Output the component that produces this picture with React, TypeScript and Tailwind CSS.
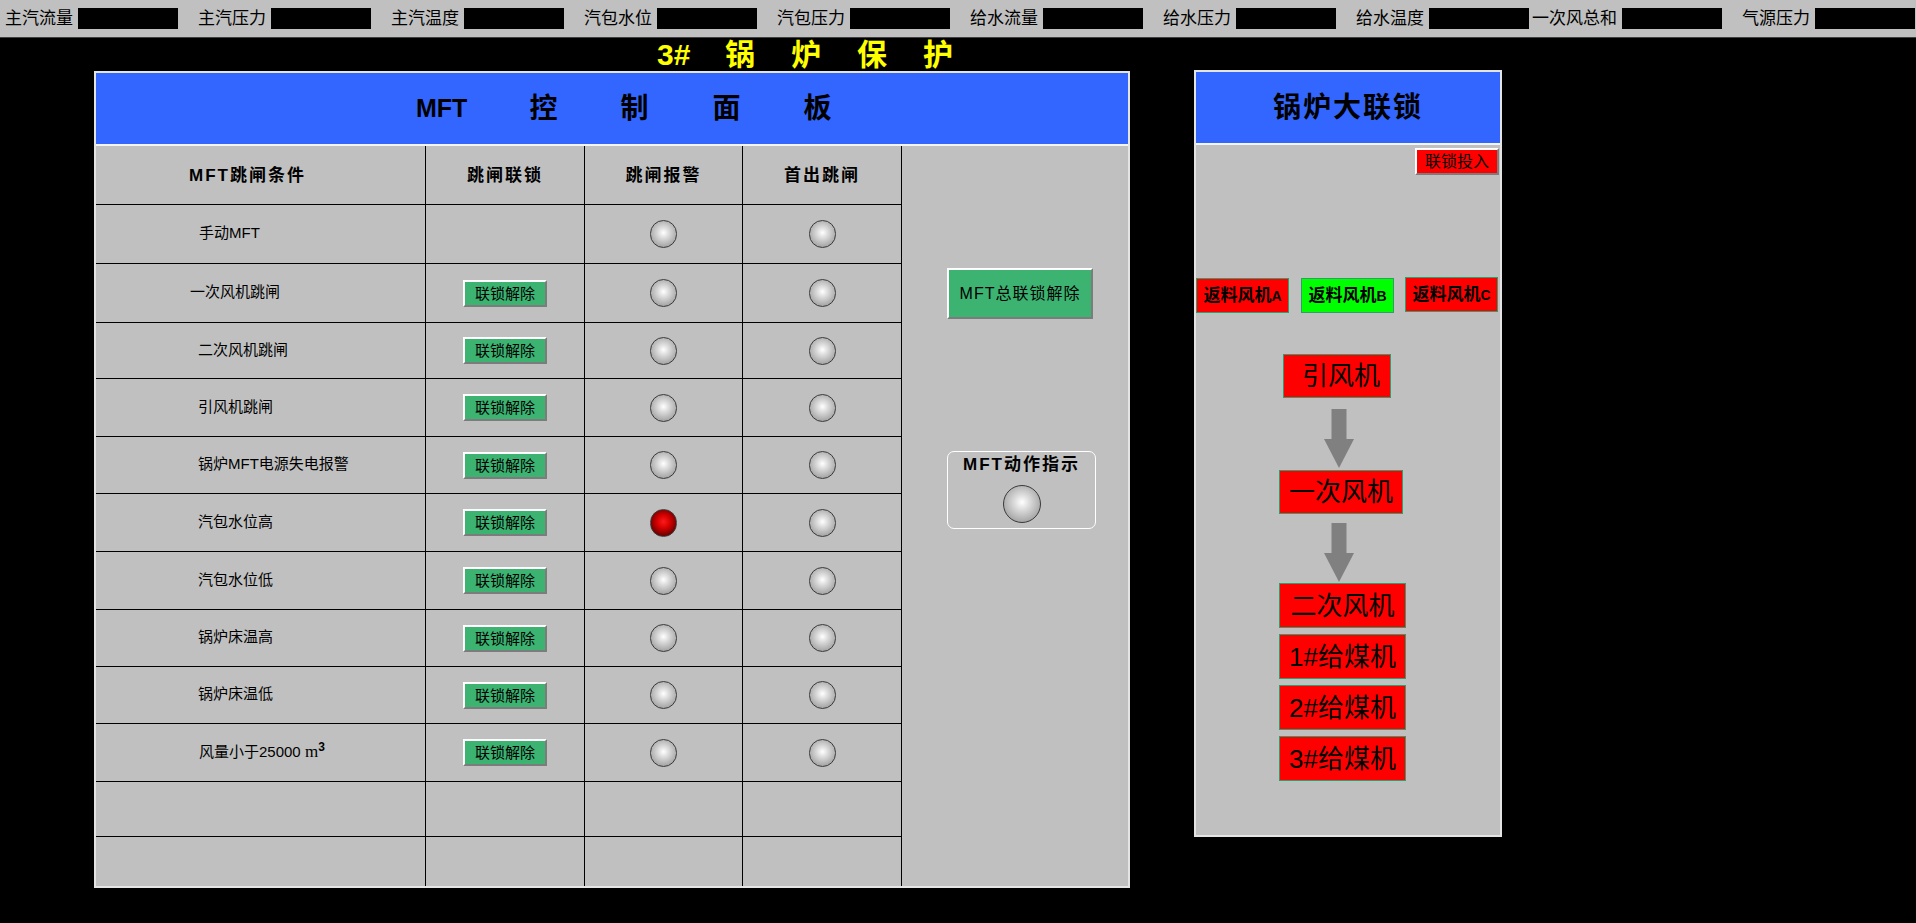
import React from 'react';

const topItems = ['主汽流量', '主汽压力', '主汽温度', '汽包水位', '汽包压力', '给水流量', '给水压力', '给水温度', '一次风总和', '气源压力'];

function Led({ red = false, big = false }: { red?: boolean; big?: boolean }) {
  const size = big ? 'w-[38px] h-[38px]' : 'w-[27px] h-[28px]';
  const fill = red
    ? 'bg-[radial-gradient(circle_at_50%_45%,#ff1a1a_0%,#d40000_35%,#600000_78%,#200000_100%)]'
    : 'bg-[radial-gradient(circle_at_50%_45%,#ffffff_0%,#dcdcdc_28%,#a8a8a8_72%,#7c7c7c_100%)]';
  return <div className={`${size} ${fill} rounded-full border border-[#3a3a3a]`} />;
}

function LockBtn() {
  return (
    <div className="w-[84px] h-[27px] bg-[#3cb371] border-t-2 border-l-2 border-b-2 border-r-2 border-t-white border-l-white border-b-[#7c7c7c] border-r-[#7c7c7c] flex items-center justify-center text-[15px] leading-none text-black">
      联锁解除
    </div>
  );
}

type Row = { label: React.ReactNode; btn: boolean; red?: boolean; pl: string; h: string; empty?: boolean };

const rows: Row[] = [
  { label: '手动MFT', btn: false, pl: 'pl-[103px]', h: 'h-[59px]' },
  { label: '一次风机跳闸', btn: true, pl: 'pl-[94px]', h: 'h-[59px]' },
  { label: '二次风机跳闸', btn: true, pl: 'pl-[102px]', h: 'h-[56px]' },
  { label: '引风机跳闸', btn: true, pl: 'pl-[102px]', h: 'h-[58px]' },
  { label: '锅炉MFT电源失电报警', btn: true, pl: 'pl-[102px]', h: 'h-[57px]' },
  { label: '汽包水位高', btn: true, red: true, pl: 'pl-[102px]', h: 'h-[58px]' },
  { label: '汽包水位低', btn: true, pl: 'pl-[102px]', h: 'h-[58px]' },
  { label: '锅炉床温高', btn: true, pl: 'pl-[102px]', h: 'h-[57px]' },
  { label: '锅炉床温低', btn: true, pl: 'pl-[102px]', h: 'h-[57px]' },
  {
    label: (
      <span>
        风量小于25000{' '}
        <span className="font-['Liberation_Serif',serif] text-[17px]">m</span>
        <sup className="font-bold text-[12px]">3</sup>
      </span>
    ),
    btn: true,
    pl: 'pl-[103px]',
    h: 'h-[58px]',
  },
  { label: '', btn: false, pl: '', h: 'h-[55px]', empty: true },
];

function RedBox({ children, w, h, extra = '' }: { children: React.ReactNode; w: string; h: string; extra?: string }) {
  return (
    <div className={`${w} ${h} ${extra} bg-[#ff0000] border border-[#2f9e6a] flex items-center text-[26px] leading-none text-black`}>
      {children}
    </div>
  );
}

function Arrow() {
  return (
    <svg width="30" height="59" viewBox="0 0 30 59" className="block">
      <rect x="7.5" y="0" width="15" height="30" fill="#808080" />
      <polygon points="0,30 30,30 15,59" fill="#808080" />
    </svg>
  );
}

export default function App() {
  return (
    <div className="w-[1916px] h-[923px] bg-black overflow-hidden flex flex-col font-['Liberation_Sans','Noto_Sans_CJK_SC',sans-serif] text-black">
      {/* top bar */}
      <div className="h-[38px] bg-[#c0c0c0] border-b border-[#404040] flex items-center shrink-0">
        {topItems.map((t) => (
          <div key={t} className="w-[193px] flex items-center shrink-0">
            <div className="w-[73px] flex justify-end whitespace-nowrap text-[17px] leading-none">{t}</div>
            <div className="ml-[5px] w-[100px] h-[21px] bg-black" />
          </div>
        ))}
      </div>

      {/* title */}
      <div className="h-[33px] flex items-center pl-[657px] text-[#ffff00] font-bold text-[30px] leading-none shrink-0">
        <span className="w-[33px]">3#</span>
        <span className="ml-[35px]">锅</span>
        <span className="ml-[36px]">炉</span>
        <span className="ml-[36px]">保</span>
        <span className="ml-[36px]">护</span>
      </div>

      {/* main */}
      <div className="flex items-start">
        {/* left panel */}
        <div className="ml-[94px] w-[1036px] h-[817px] border-2 border-[#e4e4e4] flex flex-col shrink-0">
          <div className="h-[73px] bg-[#3366ff] border-b-2 border-[#f4f4f4] flex items-center pl-[320px] font-bold text-[28px] leading-none shrink-0">
            <span className="text-[25px]">MFT</span>
            <span className="ml-[62px]">控</span>
            <span className="ml-[63px]">制</span>
            <span className="ml-[64px]">面</span>
            <span className="ml-[63px]">板</span>
          </div>
          <div className="flex-1 bg-[#c0c0c0] flex">
            {/* table columns 1-4 */}
            <div className="w-[806px] flex flex-col">
              <div className="h-[59px] flex border-b border-black font-bold text-[17px] tracking-[2px] leading-none">
                <div className="w-[330px] border-r border-black flex items-center pl-[93px]">MFT跳闸条件</div>
                <div className="w-[159px] border-r border-black flex items-center justify-center">跳闸联锁</div>
                <div className="w-[158px] border-r border-black flex items-center justify-center">跳闸报警</div>
                <div className="w-[159px] border-r border-black flex items-center justify-center">首出跳闸</div>
              </div>
              {rows.map((r, i) => (
                <div key={i} className={`${r.h} flex border-b border-black text-[15px] leading-none`}>
                  <div className={`w-[330px] border-r border-black flex items-center pb-[3px] ${r.pl}`}>{r.label}</div>
                  <div className="w-[159px] border-r border-black flex items-center justify-center">{r.btn && <LockBtn />}</div>
                  <div className="w-[158px] border-r border-black flex items-center justify-center">{!r.empty && <Led red={r.red} />}</div>
                  <div className="w-[159px] border-r border-black flex items-center justify-center">{!r.empty && <Led />}</div>
                </div>
              ))}
              <div className="flex-1 flex">
                <div className="w-[330px] border-r border-black" />
                <div className="w-[159px] border-r border-black" />
                <div className="w-[158px] border-r border-black" />
                <div className="w-[159px] border-r border-black" />
              </div>
            </div>
            {/* column 5 */}
            <div className="flex-1 flex flex-col pl-[45px] pt-[122px]">
              <div className="w-[146px] h-[51px] bg-[#3cb371] border-t-2 border-l-2 border-b-2 border-r-2 border-t-white border-l-white border-b-[#7c7c7c] border-r-[#7c7c7c] flex items-center justify-center text-[16px] tracking-[1px] leading-none">
                MFT总联锁解除
              </div>
              <div className="mt-[132px] w-[149px] h-[78px] rounded-[7px] border border-white flex flex-col items-center pt-[3px]">
                <div className="font-bold text-[17px] tracking-[2px] leading-[20px]">MFT动作指示</div>
                <div className="mt-[10px]">
                  <Led big />
                </div>
              </div>
            </div>
          </div>
        </div>

        {/* right panel */}
        <div className="ml-[64px] -mt-px w-[308px] h-[767px] border-2 border-[#e4e4e4] flex flex-col shrink-0">
          <div className="h-[73px] bg-[#3366ff] border-b-2 border-[#f4f4f4] flex items-center justify-center font-semibold text-[28px] tracking-[2px] leading-none shrink-0">
            锅炉大联锁
          </div>
          <div className="flex-1 bg-[#c0c0c0] flex flex-col">
            <div className="self-end mr-[1px] mt-[3px] w-[84px] h-[27px] bg-[#ff0000] border-t-2 border-l-2 border-b-2 border-r-2 border-t-white border-l-white border-b-[#7c7c7c] border-r-[#7c7c7c] flex items-center justify-center text-[16px] leading-none">
              联锁投入
            </div>
            <div className="mt-[103px] flex items-start font-bold text-[17px] leading-none">
              <div className="w-[93px] h-[35px] bg-[#ff0000] border border-[#2f9e6a] flex items-center justify-center">
                返料风机<span className="text-[14px]">A</span>
              </div>
              <div className="ml-[12px] w-[93px] h-[35px] bg-[#00ff00] border border-[#2f9e6a] flex items-center justify-center">
                返料风机<span className="text-[14px]">B</span>
              </div>
              <div className="ml-[11px] -mt-px w-[93px] h-[35px] bg-[#ff0000] border border-[#2f9e6a] flex items-center justify-center">
                返料风机<span className="text-[14px]">C</span>
              </div>
            </div>
            <RedBox w="w-[108px]" h="h-[44px]" extra="mt-[41px] ml-[87px] pl-[18px]">
              引风机
            </RedBox>
            <div className="mt-[11px] ml-[128px]">
              <Arrow />
            </div>
            <RedBox w="w-[124px]" h="h-[44px]" extra="mt-[2px] ml-[83px] justify-center">
              一次风机
            </RedBox>
            <div className="mt-[9px] ml-[128px]">
              <Arrow />
            </div>
            <RedBox w="w-[127px]" h="h-[45px]" extra="mt-[1px] ml-[83px] justify-center">
              二次风机
            </RedBox>
            <RedBox w="w-[127px]" h="h-[45px]" extra="mt-[6px] ml-[83px] justify-center">
              1#给煤机
            </RedBox>
            <RedBox w="w-[127px]" h="h-[45px]" extra="mt-[6px] ml-[83px] justify-center">
              2#给煤机
            </RedBox>
            <RedBox w="w-[127px]" h="h-[45px]" extra="mt-[6px] ml-[83px] justify-center">
              3#给煤机
            </RedBox>
          </div>
        </div>
      </div>
    </div>
  );
}
